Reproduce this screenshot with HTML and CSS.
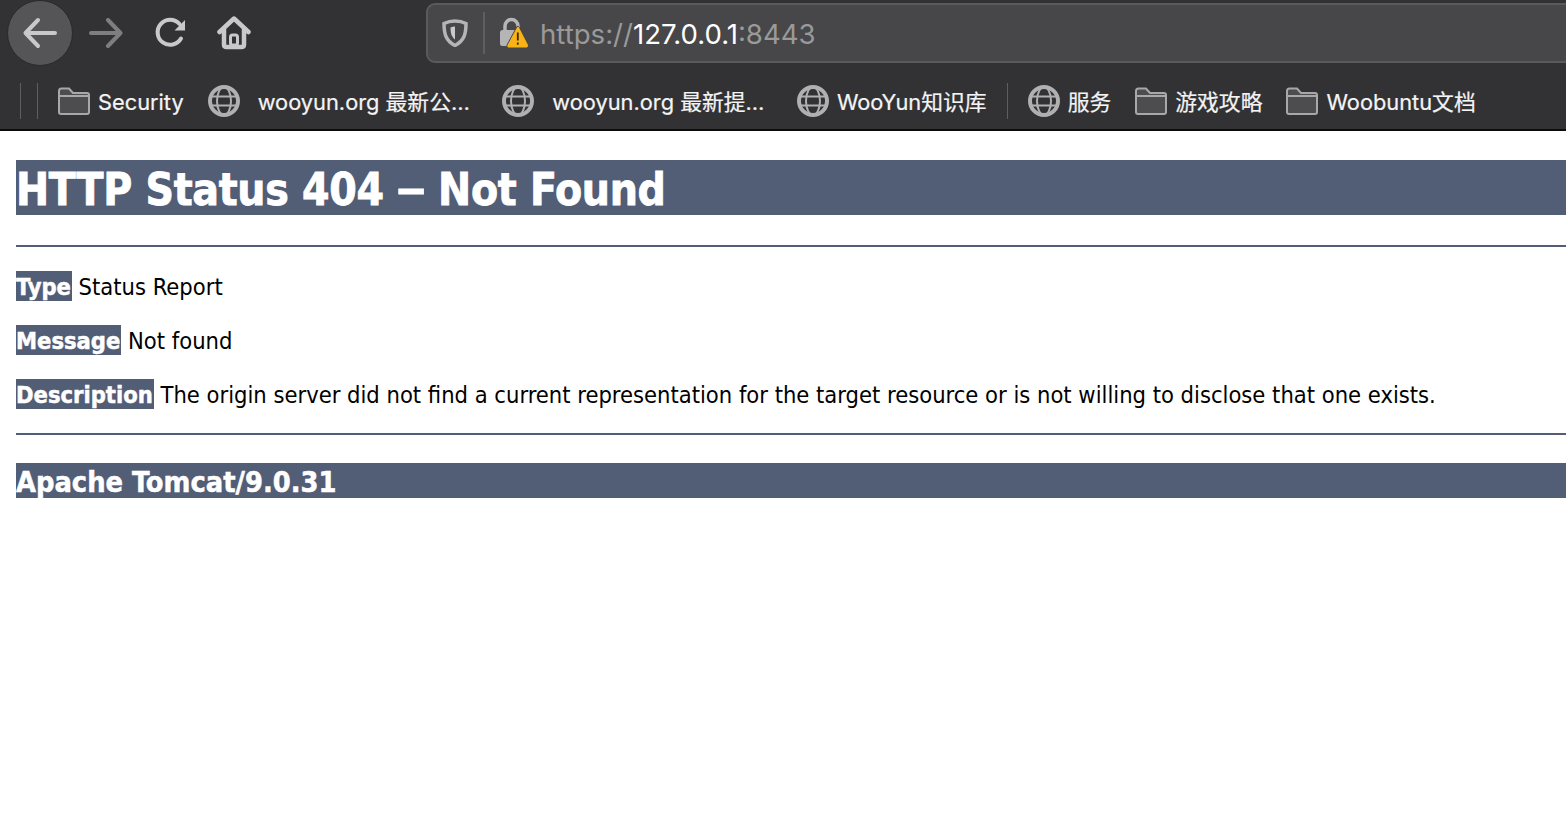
FILE: index.html
```html
<!DOCTYPE html>
<html lang="en">
<head>
    <meta charset="UTF-8">
    <meta name="viewport" content="width=device-width, initial-scale=1.0">
    <title>HTTP Status 404 – Not Found</title>
    <link rel="stylesheet" href="styles.css">
</head>
<body>

<header class="browser">
    <div class="toolbar">
        <div class="nav-button back">
            <svg width="36" height="36" viewBox="0 0 36 36"><path d="M33 18H4M16 5 3.500 18 16 31" class="icon-line"/></svg>
        </div>
        <div class="nav-button forward">
            <svg width="36" height="36" viewBox="0 0 36 36"><path d="M3 18H32M20 5 32.500 18 20 31" class="icon-line"/></svg>
        </div>
        <div class="nav-button reload">
            <svg width="32" height="32" viewBox="0 0 32 32"><path d="M26 21.500A12.500 12.500 0 1 1 24.500 7" class="icon-line"/><path d="M30 3V13.500H19.500Z" class="icon-fill"/></svg>
        </div>
        <div class="nav-button home">
            <svg width="34" height="34" viewBox="0 0 34 34"><path d="M2.500 16 17 2.500 31.500 16M7 13V28.500Q7 31 9.500 31H24.500Q27 31 27 28.500V13" class="icon-line home-line"/><rect x="13.500" y="19" width="7" height="10" rx="2" class="icon-line home-door"/></svg>
        </div>

        <div class="url-bar">
            <svg class="shield" width="26" height="28" viewBox="0 0 26 28"><path d="M13 2C9 2 5 3 2 4.500C2 15 4 22 13 26.500C22 22 24 15 24 4.500C21 3 17 2 13 2Z" class="shield-outer"/><path d="M13 7.500C11.500 7.500 10 8 8.500 8.500C8.500 14 9.500 18 13 20.500Z" class="icon-fill"/></svg>
            <span class="url-divider"></span>
            <svg class="lock" width="30" height="32" viewBox="0 0 30 32"><path d="M6 14V9A6.500 6.500 0 0 1 19 9V14" class="lock-shackle"/><rect x="1" y="13" width="19" height="16" rx="2.500" class="lock-body"/><path d="M18 9.500Q19.500 9 20.500 10.500L29.500 28Q30 30.500 27.500 31H9.500Q7 30.500 8 28Z" class="lock-warning"/><path d="M18.800 15.500V23.500M18.800 25.500V27.800" class="lock-mark"/></svg>
            <div class="url-text"><span class="url-dim">https://</span>127.0.0.1<span class="url-dim">:8443</span></div>
        </div>
    </div>

    <div class="bookmarks">
        <span class="bookmark-sep first"></span>
        <span class="bookmark-sep second"></span>

        <a class="bookmark folder-item">
            <svg width="32" height="28" viewBox="0 0 32 28"><use href="#folder"/></svg>
            <span class="bookmark-label">Security</span>
        </a>
        <a class="bookmark page wide">
            <svg width="32" height="32" viewBox="0 0 32 32"><use href="#globe"/></svg>
            <span class="bookmark-label">wooyun.org 最新公…</span>
        </a>
        <a class="bookmark page wide">
            <svg width="32" height="32" viewBox="0 0 32 32"><use href="#globe"/></svg>
            <span class="bookmark-label">wooyun.org 最新提…</span>
        </a>
        <a class="bookmark page">
            <svg width="32" height="32" viewBox="0 0 32 32"><use href="#globe"/></svg>
            <span class="bookmark-label">WooYun知识库</span>
        </a>
        <span class="bookmark-sep third"></span>
        <a class="bookmark page">
            <svg width="32" height="32" viewBox="0 0 32 32"><use href="#globe"/></svg>
            <span class="bookmark-label">服务</span>
        </a>
        <a class="bookmark folder-item">
            <svg width="32" height="28" viewBox="0 0 32 28"><use href="#folder"/></svg>
            <span class="bookmark-label">游戏攻略</span>
        </a>
        <a class="bookmark folder-item">
            <svg width="32" height="28" viewBox="0 0 32 28"><use href="#folder"/></svg>
            <span class="bookmark-label">Woobuntu文档</span>
        </a>
    </div>
</header>

<main class="content">
    <h1>HTTP Status 404 <span class="dash">–</span> Not Found</h1>
    <hr>
    <p><b>Type</b> Status Report</p>
    <p><b>Message</b> Not found</p>
    <p><b>Description</b> The origin server did not find a current representation for the target resource or is not willing to disclose that one exists.</p>
    <hr>
    <h3>Apache Tomcat/9.0.31</h3>
</main>

<svg class="icon-defs" width="0" height="0">
    <defs>
        <g id="folder">
            <path d="M1 4Q1 1.500 3.500 1.500H11L15 6H29Q31 6 31 8V25Q31 27 29 27H3Q1 27 1 25Z" fill="#4d4d4f" stroke="#a8a8a9" stroke-width="2"/>
            <path d="M1 9H31" stroke="#a8a8a9" stroke-width="2" fill="none"/>
        </g>
        <g id="globe" fill="none" stroke="#b0b0b1">
            <circle cx="16" cy="16" r="14" stroke-width="4"/>
            <ellipse cx="16" cy="16" rx="7" ry="14" stroke-width="2"/>
            <path d="M3 11.500H29M3 20.500H29" stroke-width="2"/>
        </g>
    </defs>
</svg>

</body>
</html>
```

FILE: styles.css
```css
html, body {
    margin: 0;
    padding: 0;
    background-color: #fff;
    overflow: hidden;
}

body {
    height: 816px;
}

.browser {
    background-color: #323234;
    height: 129px;
    border-bottom: 2px solid #0c0c0d;
    font-family: Inter, "Noto Sans CJK SC", sans-serif;
}

.toolbar {
    display: flex;
    align-items: center;
    height: 66px;
    padding-left: 7px;
}

.nav-button {
    display: flex;
    align-items: center;
    justify-content: center;
    flex: none;
}

.back {
    width: 66px;
    height: 66px;
    box-sizing: border-box;
    border: 1px solid #29292b;
    border-radius: 50%;
    background-color: #555557;
}

.forward {
    width: 36px;
    margin-left: 15px;
    opacity: 0.5;
}

.reload {
    width: 32px;
    margin-left: 31px;
}

.home {
    width: 34px;
    margin-left: 30px;
}

.icon-line {
    fill: none;
    stroke: #c9c9ca;
    stroke-width: 4;
    stroke-linecap: round;
    stroke-linejoin: round;
}

.icon-fill {
    fill: #c9c9ca;
}

.home-line {
    stroke-width: 4.500;
}

.home-door {
    stroke-width: 3;
}

.url-bar {
    display: flex;
    align-items: center;
    flex: 1;
    height: 60px;
    margin-left: 175px;
    margin-right: -10px;
    box-sizing: border-box;
    padding-left: 14px;
    background-color: #474749;
    border: 2px solid #5a5a5c;
    border-radius: 9px;
}

.shield {
    flex: none;
}

.shield-outer {
    fill: none;
    stroke: #b5b5b6;
    stroke-width: 3.500;
}

.url-divider {
    width: 2px;
    height: 42px;
    margin: 0 14px 0 15px;
    background-color: #5d5d62;
    flex: none;
}

.lock {
    flex: none;
}

.lock-shackle {
    fill: none;
    stroke: #b5b5b6;
    stroke-width: 3.500;
}

.lock-body {
    fill: #b5b5b6;
}

.lock-warning {
    fill: #f9b316;
    stroke: #474749;
    stroke-width: 1;
}

.lock-mark {
    stroke: #3a2d08;
    stroke-width: 1.800;
}

.url-text {
    margin-left: 11px;
    padding-top: 2px;
    font-size: 27.600px;
    line-height: 34px;
    color: #fff;
    white-space: nowrap;
}

.url-dim {
    color: #9a9a9b;
}

.bookmarks {
    display: flex;
    align-items: center;
    height: 63px;
    box-sizing: border-box;
    padding: 7px 0 0 20px;
    color: #f4f4f5;
    font-size: 21.800px;
    -webkit-text-stroke: 0.200px #f4f4f5;
}

.bookmark-sep {
    width: 1px;
    height: 36px;
    background-color: #5e5e60;
    flex: none;
}

.bookmark-sep.second {
    margin-left: 16px;
    margin-right: 20px;
}

.bookmark-sep.third {
    margin-left: 20px;
    margin-right: 20px;
}

.bookmark {
    display: flex;
    align-items: center;
    gap: 8px;
    white-space: nowrap;
}

.bookmark svg {
    flex: none;
}

.bookmark-label {
    padding-top: 2px;
    line-height: 26px;
}

.bookmark + .bookmark {
    margin-left: 24px;
}

.bookmark.wide {
    gap: 18px;
}

.bookmark.wide + .bookmark {
    margin-left: 32.500px;
}

.icon-defs {
    position: absolute;
}

.content {
    padding: 29px 0 0 16px;
    font-family: "DejaVu Sans Condensed", "DejaVu Sans", Tahoma, sans-serif;
    color: #000;
}

h1 {
    margin: 0;
    height: 55px;
    line-height: 59px;
    font-size: 44px;
    font-weight: bold;
    letter-spacing: -0.300px;
    background-color: #525d76;
    color: #fff;
    -webkit-text-stroke: 0.800px #fff;
}

.dash {
    font-family: "Liberation Sans", sans-serif;
    font-size: 50px;
    line-height: 1;
}

hr {
    height: 2px;
    margin: 30px 0 0;
    border: none;
    background-color: #525d76;
}

p {
    margin: 24px 0 0;
    font-size: 23.500px;
    line-height: 30px;
    white-space: nowrap;
}

b {
    padding: 2px 1px 0 0;
    background-color: #525d76;
    color: #fff;
    -webkit-text-stroke: 0.500px #fff;
}

hr + p {
    margin-top: 25px;
}

p + hr {
    margin-top: 23px;
}

h3 {
    margin: 28px 0 0;
    height: 35px;
    line-height: 39px;
    font-size: 28.700px;
    font-weight: bold;
    background-color: #525d76;
    color: #fff;
    -webkit-text-stroke: 0.500px #fff;
}
```
